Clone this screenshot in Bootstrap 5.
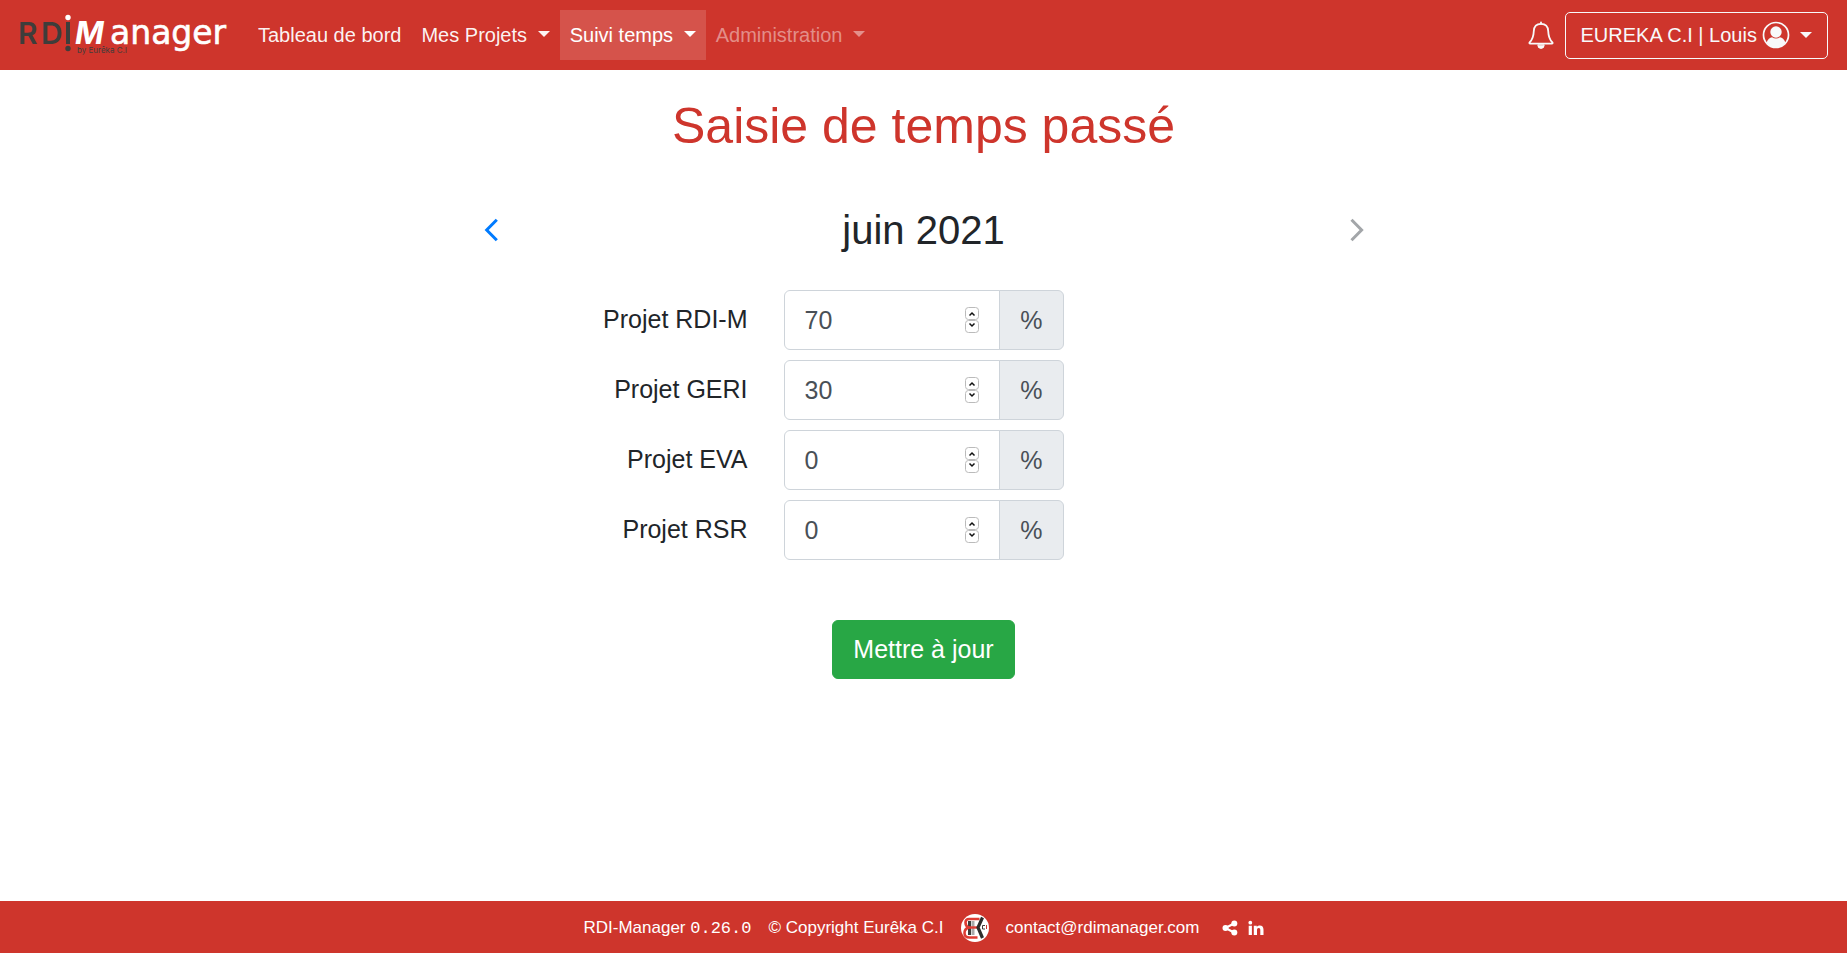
<!DOCTYPE html>
<html lang="fr">
<head>
<meta charset="utf-8">
<meta name="viewport" content="width=device-width, initial-scale=1">
<title>RDI-Manager – Saisie de temps passé</title>
<link href="https://cdn.jsdelivr.net/npm/bootstrap@5.3.0/dist/css/bootstrap.min.css" rel="stylesheet">
<style>
  :root { --rdi-red: #ce352c; }
  html { font-size: 20px; }
  body { font-family: "Liberation Sans", Arial, sans-serif; color: #212529; }
  .rdi-bg { background-color: var(--rdi-red); }
  .rdi-navbar { padding: 10px 19px 10px 16px; }
  .rdi-navbar .navbar-brand { padding: 0; margin-right: 20px; }
  .rdi-navbar .nav-link { padding: 10px !important; color: #fffffff2; }
  .rdi-navbar .nav-link.active { background: #ffffff26; color: #fff; }
  .rdi-navbar .nav-link.disabled { color: #ffffff73; }
  .btn-user { --bs-btn-color: #f8f9fa; --bs-btn-border-color: #f8f9fa; --bs-btn-border-radius: 5px; --bs-btn-hover-color: #fff; --bs-btn-hover-border-color: #fff; padding: 7px 15px 8px; }
  .rdi-title { font-size: 50px; line-height: 60px; color: var(--rdi-red); font-weight: 400; margin: 26px 0 50px; }
  .rdi-month { max-width: 880px; margin-bottom: 36px; }
  .rdi-month h2 { font-size: 40px; line-height: 48px; font-weight: 400; }
  .month-step { color: #007bff; line-height: 0; }
  .month-step[aria-disabled] { color: #a3a6a9; pointer-events: none; }
  .time-row { --bs-gutter-x: 36px; font-size: 25px; margin-bottom: 10px; }
  .time-row .input-group { width: 280px; height: 60px; }
  .time-row .form-control, .time-row .input-group-text { font-size: 25px; line-height: 38px; padding: 10px 20px; border-color: #ced4da; border-radius: 6px; color: #495057; }
  .time-row .form-control { border-radius: 6px 0 0 6px; }
  .time-row .input-group-text { background: #e9ecef; border-radius: 0 6px 6px 0; }
  .time-row input::-webkit-inner-spin-button {
    -webkit-appearance: none; opacity: 1; width: 14px; height: 38px; margin: 0;
    background: url("data:image/svg+xml,%3Csvg xmlns='http://www.w3.org/2000/svg' width='14' height='26' fill='none'%3E%3Cg stroke='%23bbb'%3E%3Crect x='.5' y='.5' width='13' height='12' rx='3'/%3E%3Crect x='.5' y='13.500' width='13' height='12' rx='3'/%3E%3C/g%3E%3Cpath d='M4.500 8.500 7 6l2.500 2.500M4.500 16.500 7 19l2.500-2.500' stroke='%23111' stroke-width='1.500'/%3E%3C/svg%3E") center no-repeat;
  }
  .btn-update { --bs-btn-color: #fff; --bs-btn-bg: #28a745; --bs-btn-border-color: #28a745; --bs-btn-hover-color: #fff; --bs-btn-hover-bg: #218838; font-size: 25px; line-height: 37px; padding: 10px 20px; border-radius: 6px; margin-top: 50px; }
  .rdi-footer { font-size: 17px; line-height: 26px; padding: 13px 16px 11px; column-gap: 17px; color: #fff; min-height: 52px; }
  .rdi-footer a { color: #fff; text-decoration: none; }
  .rdi-footer code { font: 17px "Liberation Mono", monospace; color: #fff; }
</style>
</head>
<body class="d-flex flex-column min-vh-100">
<nav class="navbar navbar-expand-xl navbar-dark rdi-bg rdi-navbar" aria-label="Navigation principale">
  <a class="navbar-brand" href="#" aria-label="RDI Manager by Eurêka C.I">
    <svg class="d-block" width="212" height="50" viewBox="16 10 212 50">
      <g fill="#3e3d3b">
        <text x="18" y="44" font-family="Inter" font-size="30" font-weight="600">R</text>
        <text x="41" y="44" font-family="Inter" font-size="30" font-weight="600">D</text>
        <rect x="66" y="22" width="4" height="22"/>
        <circle cx="68" cy="48.500" r="2.700"/>
        <text x="77" y="53" font-family="Inter" font-size="8">by Eurêka C.I</text>
      </g>
      <g fill="#fff">
        <circle cx="68" cy="17.500" r="2.700"/>
        <text x="75" y="44" font-family="Inter" font-size="31" font-style="italic" font-weight="700">M</text>
        <text x="110" y="44" font-family="DejaVu Sans" font-size="33" stroke="#fff" stroke-width=".6">anager</text>
      </g>
    </svg>
  </a>
  <button class="navbar-toggler" type="button" data-bs-toggle="collapse" data-bs-target="#menu" aria-controls="menu" aria-label="Menu"><span class="navbar-toggler-icon"></span></button>
  <div class="collapse navbar-collapse" id="menu">
    <ul class="navbar-nav me-auto">
      <li class="nav-item"><a class="nav-link" href="#">Tableau de bord</a></li>
      <li class="nav-item"><a class="nav-link dropdown-toggle" href="#">Mes Projets </a></li>
      <li class="nav-item"><a class="nav-link dropdown-toggle active" href="#" aria-current="page">Suivi temps </a></li>
      <li class="nav-item"><a class="nav-link dropdown-toggle disabled" aria-disabled="true" href="#">Administration </a></li>
    </ul>
    <div class="d-flex align-items-center">
      <a href="#" class="me-2" aria-label="Notifications">
        <svg class="d-block" width="28" height="28" viewBox="0 0 26 28" fill="none" stroke="#f8f9fa" stroke-width="1.800" stroke-linejoin="round" stroke-linecap="round">
          <path d="M13 2.800c-4.400 0-7 3-7.200 7.200-.2 5-.9 8-4 11.200-.8.800-.5 1.500.5 1.500h21.400c1 0 1.300-.7.500-1.500-3.100-3.200-3.800-6.200-4-11.200-.2-4.200-2.800-7.200-7.200-7.200z"/>
          <path d="M13 1.300v1.500"/>
          <path d="M9.800 24.200a3.200 3.200 0 0 0 6.400 0z" fill="#f8f9fa" stroke-width="1"/>
        </svg>
      </a>
      <button type="button" class="btn btn-user dropdown-toggle d-flex align-items-center">
        <span>EUREKA C.I | Louis</span>
        <svg class="mx-1" width="28" height="28" viewBox="0 0 28 28">
          <circle cx="14" cy="14" r="12.500" fill="none" stroke="#f8f9fa" stroke-width="1.700"/>
          <circle cx="14" cy="11" r="5.700" fill="#f8f9fa"/>
          <path d="M4.500 21.800C5.600 18.300 8 16.500 10 16.200c2.400 1.600 5.600 1.600 8 0 2 .3 4.400 2.100 5.500 5.600C21 25 17.600 26.800 14 26.800S7 25 4.500 21.800z" fill="#f8f9fa"/>
        </svg>
      </button>
    </div>
  </div>
</nav>

<main class="container flex-grow-1 text-center">
  <h1 class="rdi-title">Saisie de temps passé</h1>
  <div class="rdi-month d-flex justify-content-between align-items-center mx-auto">
    <a class="month-step" href="#" aria-label="Mois précédent"><svg width="14" height="24" viewBox="0 0 14 24" fill="none" stroke="currentColor" stroke-width="3"><path d="M12.800 1.800 2.700 12l10.100 10.200"/></svg></a>
    <h2 class="mb-0">juin 2021</h2>
    <a class="month-step" href="#" aria-disabled="true" aria-label="Mois suivant"><svg width="14" height="24" viewBox="0 0 14 24" fill="none" stroke="currentColor" stroke-width="3"><path d="M1.500 1.800 11.600 12 1.500 22.200"/></svg></a>
  </div>
  <form>
    <div class="row time-row align-items-center">
      <label class="col text-end" for="rdim">Projet RDI-M</label>
      <div class="col-auto"><div class="input-group flex-nowrap"><input type="number" class="form-control" id="rdim" value="70" min="0" max="100"><span class="input-group-text">%</span></div></div>
      <div class="col"></div>
    </div>
    <div class="row time-row align-items-center">
      <label class="col text-end" for="geri">Projet GERI</label>
      <div class="col-auto"><div class="input-group flex-nowrap"><input type="number" class="form-control" id="geri" value="30" min="0" max="100"><span class="input-group-text">%</span></div></div>
      <div class="col"></div>
    </div>
    <div class="row time-row align-items-center">
      <label class="col text-end" for="eva">Projet EVA</label>
      <div class="col-auto"><div class="input-group flex-nowrap"><input type="number" class="form-control" id="eva" value="0" min="0" max="100"><span class="input-group-text">%</span></div></div>
      <div class="col"></div>
    </div>
    <div class="row time-row align-items-center">
      <label class="col text-end" for="rsr">Projet RSR</label>
      <div class="col-auto"><div class="input-group flex-nowrap"><input type="number" class="form-control" id="rsr" value="0" min="0" max="100"><span class="input-group-text">%</span></div></div>
      <div class="col"></div>
    </div>
    <button type="submit" class="btn btn-update">Mettre à jour</button>
  </form>
</main>

<footer class="rdi-bg rdi-footer d-flex flex-wrap justify-content-center align-items-center">
  <span>RDI-Manager <code>0.26.0</code></span>
  <span>© Copyright Eurêka C.I</span>
  <a href="#" aria-label="Eurêka C.I">
    <svg class="d-block" width="28" height="28" viewBox="0 0 28 28">
      <circle cx="14" cy="14" r="14" fill="#fff"/>
      <path d="M8.500 7v14" stroke="#3e3d3b" stroke-width="3"/>
      <path d="M12 7v14" stroke="#aaa" stroke-width="3"/>
      <path d="M18.500 5H8Q4.500 5 4.500 8.500t3 5Q3.500 15 3.500 19q0 4.500 5 4.500h8" fill="none" stroke="#de3c34" stroke-width="2.600"/>
      <path d="M6 13.500h10" stroke="#de3c34" stroke-width="2.400"/>
      <path d="M21.500 3.500 17 13.500l4.500 10.500" fill="none" stroke="#2e2d2c" stroke-width="3.200"/>
      <path d="M24 11.500h-2.500v3.500H24" fill="none" stroke="#3e3d3b" stroke-width="1"/>
      <path d="M25.500 11v4" stroke="#ce352c" stroke-width="1"/>
    </svg>
  </a>
  <a href="mailto:contact@rdimanager.com">contact@rdimanager.com</a>
  <span class="d-flex ms-1">
    <a href="#" aria-label="Partager"><svg class="d-block" width="16" height="16" viewBox="0 0 16 16" fill="#fff"><path d="M3.500 8 12 3.500M3.500 8l8.500 4.500" stroke="#fff" stroke-width="2"/><circle cx="3.500" cy="8" r="3"/><circle cx="12.300" cy="3.600" r="3"/><circle cx="12.300" cy="12.400" r="3"/></svg></a>
    <a class="ms-2" href="#" aria-label="LinkedIn"><svg class="d-block" width="16" height="16" viewBox="0 0 16 16" fill="#fff"><circle cx="2.300" cy="2.700" r="1.900"/><path d="M.7 5.700h3.200V15H.7zM5.800 5.700h3v1.300c.6-1 1.600-1.500 3-1.500 2.400 0 3.700 1.500 3.700 4.200V15h-3.200v-4.900c0-1.200-.5-2-1.600-2s-1.700.8-1.700 2V15H5.800z"/></svg></a>
  </span>
</footer>
<script src="https://cdn.jsdelivr.net/npm/bootstrap@5.3.0/dist/js/bootstrap.bundle.min.js"></script>
</body>
</html>
